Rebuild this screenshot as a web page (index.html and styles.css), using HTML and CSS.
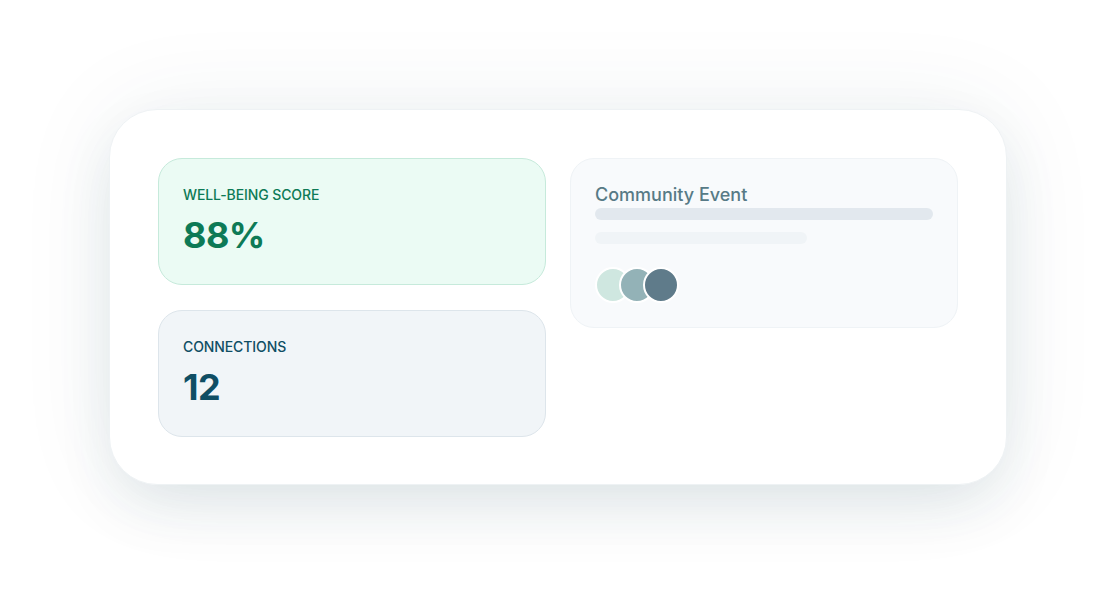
FILE: index.html
```html
<!DOCTYPE html>
<html lang="en">
<head>
  <meta charset="UTF-8" />
  <title>Dashboard preview</title>
  <link rel="stylesheet" href="styles.css">
</head>
<body>

  <div class="panel">
    <div class="col">
      <div class="stat stat-green">
        <div class="stat-label">Well-being score</div>
        <div class="stat-value">88%</div>
      </div>
      <div class="stat stat-blue">
        <div class="stat-label">Connections</div>
        <div class="stat-value">12</div>
      </div>
    </div>

    <div class="col">
      <div class="event">
        <div class="event-title">Community Event</div>
        <div class="line line-full"></div>
        <div class="line line-short"></div>
        <div class="avatars">
          <span class="avatar a1"></span>
          <span class="avatar a2"></span>
          <span class="avatar a3"></span>
        </div>
      </div>
    </div>
  </div>

</body>
</html>
```

FILE: styles.css
```css
html, body {
  margin: 0;
  background: #fff;
}
body {
  font-family: Inter, "Noto Sans", sans-serif;
  padding: 109px;
  box-sizing: border-box;
  height: 594px;
}
.panel {
  background: #fff;
  border: 1px solid #eef2f4;
  border-radius: 48px;
  padding: 48px 48px 47px;
  display: grid;
  grid-template-columns: 1fr 1fr;
  gap: 24px;
  align-items: start;
  box-shadow: 0 24px 60px -8px rgba(30, 70, 90, 0.12), 0 0 100px rgba(30, 70, 90, 0.07);
}
.col {
  display: flex;
  flex-direction: column;
  gap: 25px;
}
.stat {
  border: 1px solid;
  border-radius: 24px;
  padding: 26px 24px 28px;
  height: 127px;
  box-sizing: border-box;
}
.stat-label {
  font-size: 14px;
  font-weight: 500;
  text-transform: uppercase;
  letter-spacing: -0.1px;
  line-height: 20px;
}
.stat-value {
  font-size: 36px;
  font-weight: 700;
  line-height: 44px;
  margin-top: 8px;
  letter-spacing: -0.5px;
}
.stat-green {
  background: #ebfbf4;
  border-color: #c6eadb;
  color: #0d7a56;
}
.stat-blue {
  background: #f1f5f8;
  border-color: #dde5eb;
  color: #0f4e64;
}
.event {
  background: #f8fafc;
  border: 1px solid #eff3f6;
  border-radius: 24px;
  padding: 24px;
}
.event-title {
  font-size: 18px;
  font-weight: 500;
  color: #577a86;
  line-height: 24px;
}
.line {
  height: 12px;
  border-radius: 6px;
}
.line-full {
  background: #e2e8ee;
  margin-top: 1px;
}
.line-short {
  background: #f0f4f7;
  width: 212px;
  margin-top: 12px;
}
.avatars {
  display: flex;
  margin-top: 23px;
}
.avatar {
  width: 32px;
  height: 32px;
  border-radius: 50%;
  border: 2px solid #fff;
  margin-right: -12px;
}
.a1 { background: #cfe7e0; }
.a2 { background: #93b2b7; }
.a3 { background: #5f7b8a; }
```
